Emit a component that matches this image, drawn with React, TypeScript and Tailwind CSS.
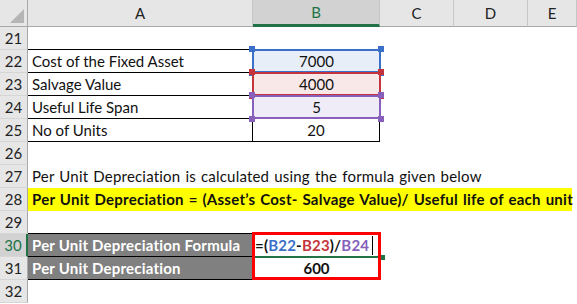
import React from 'react';

const COLS = [
  { key: 'A', w: 'w-[225px]' },
  { key: 'B', w: 'w-[127px]' },
  { key: 'C', w: 'w-[74px]' },
  { key: 'D', w: 'w-[74px]' },
  { key: 'E', w: 'flex-1' },
];

function RowHead({ n, active }: { n: number; active?: boolean }) {
  return (
    <div
      className={`w-[28px] h-[23px] shrink-0 flex items-center justify-center border-b border-[#d5d5d5] ${
        active
          ? 'bg-[#d2d2d2] text-[#217346] border-r-2 border-r-[#217346]'
          : 'bg-[#e6e6e6] text-[#222] border-r border-r-[#a8a8a8]'
      }`}
    >
      {n}
    </div>
  );
}

function Handles({ color }: { color: string }) {
  return (
    <>
      <span className={`absolute left-[-4px] top-[-4px] size-[6px] ${color}`} />
      <span className={`absolute right-[-4px] top-[-4px] size-[6px] ${color}`} />
      <span className={`absolute left-[-4px] bottom-[-4px] size-[6px] ${color}`} />
      <span className={`absolute right-[-4px] bottom-[-4px] size-[6px] ${color}`} />
    </>
  );
}

function RefCell({
  value,
  fill,
  border,
  handle,
}: {
  value: string;
  fill: string;
  border: string;
  handle: string;
}) {
  return (
    <div className={`relative w-[127px] h-[23px] flex items-center justify-center border-b border-black ${fill}`}>
      <span className={`absolute left-[-1px] top-[-1px] right-[-1px] bottom-[-1px] border-2 ${border}`} />
      <Handles color={handle} />
      <span className="relative">{value}</span>
    </div>
  );
}

export default function App() {
  return (
    <div className="w-[577px] h-[304px] overflow-hidden bg-white text-[15px] text-[#111] font-[Lato,'Open_Sans',sans-serif] leading-none select-none">
      {/* column headers */}
      <div className="flex h-[27px]">
        <div className="relative w-[28px] shrink-0 bg-[#e6e6e6] border-r border-b border-[#a8a8a8]">
          <svg className="absolute right-[3px] bottom-[3px]" width="14" height="14" viewBox="0 0 14 14">
            <polygon points="14,0 14,14 0,14" fill="#b5b5b5" />
          </svg>
        </div>
        {COLS.map((c) => (
          <div
            key={c.key}
            className={`${c.w} shrink-0 flex items-center justify-center border-r border-[#c6c6c6] ${
              c.key === 'B'
                ? 'bg-[#d2d2d2] text-[#217346] border-b-[3px] border-b-[#217346]'
                : 'bg-[#e6e6e6] text-[#222] border-b border-b-[#a8a8a8]'
            }`}
          >
            {c.key}
          </div>
        ))}
      </div>

      {/* 21 */}
      <div className="flex">
        <RowHead n={21} />
        <div className="w-[225px] h-[23px] border-b border-black" />
      </div>

      {/* 22 */}
      <div className="flex">
        <RowHead n={22} />
        <div className="w-[225px] h-[23px] px-[4px] flex items-center border-b border-r border-black">Cost of the Fixed Asset</div>
        <RefCell value="7000" fill="bg-[#e8eef8]" border="border-[#3a70c8]" handle="bg-[#3a70c8]" />
      </div>

      {/* 23 */}
      <div className="flex">
        <RowHead n={23} />
        <div className="w-[225px] h-[23px] px-[4px] flex items-center border-b border-r border-black">Salvage Value</div>
        <RefCell value="4000" fill="bg-[#f8e8e8]" border="border-[#c4343c]" handle="bg-[#c4343c]" />
      </div>

      {/* 24 */}
      <div className="flex">
        <RowHead n={24} />
        <div className="w-[225px] h-[23px] px-[4px] flex items-center border-b border-r border-black">Useful Life Span</div>
        <RefCell value="5" fill="bg-[#efebf7]" border="border-[#8660bb]" handle="bg-[#8660bb]" />
      </div>

      {/* 25 */}
      <div className="flex">
        <RowHead n={25} />
        <div className="w-[225px] h-[23px] px-[4px] flex items-center border-b border-r border-black">No of Units</div>
        <div className="w-[127px] h-[23px] flex items-center justify-center border-b border-r border-black">20</div>
      </div>

      {/* 26 */}
      <div className="flex">
        <RowHead n={26} />
      </div>

      {/* 27 */}
      <div className="flex">
        <RowHead n={27} />
        <div className="h-[23px] px-[4px] flex items-center whitespace-nowrap tracking-[0.2px] [word-spacing:1px]">
          Per Unit Depreciation is calculated using the formula given below
        </div>
      </div>

      {/* 28 */}
      <div className="flex">
        <RowHead n={28} />
        <div className="w-[544px] h-[23px] px-[4px] flex items-center whitespace-nowrap bg-[#ffff00] font-bold tracking-[0.25px] [word-spacing:1px]">
          Per Unit Depreciation = (Asset’s Cost- Salvage Value)/ Useful life of each unit
        </div>
      </div>

      {/* 29 */}
      <div className="flex">
        <RowHead n={29} />
        <div className="w-[225px] h-[23px] border-b border-black" />
      </div>

      {/* 30 */}
      <div className="flex">
        <RowHead n={30} active />
        <div className="w-[225px] h-[23px] px-[4px] flex items-center border-b border-r border-black bg-[#808080] text-white font-bold tracking-[0.2px]">
          Per Unit Depreciation Formula
        </div>
        <div className="relative w-[127px] h-[23px] flex items-center px-[2px] font-bold tracking-[0.2px]">
          <span className="absolute left-[-1px] top-[-1px] right-[-1px] bottom-[-1px] border-2 border-[#217346]" />
          <span className="absolute right-[-5px] bottom-[-3px] size-[5px] bg-[#217346]" />
          <span className="absolute left-[-1px] top-[-2px] w-[129px] h-[48px] border-[3px] border-[#ff0000] z-10" />
          <span className="relative">
            =(<span className="text-[#3a70c8]">B22</span>-<span className="text-[#c4343c]">B23</span>)/
            <span className="text-[#8660bb]">B24</span>
          </span>
          <span className="relative inline-block w-px h-[19px] bg-black ml-[3px]" />
        </div>
      </div>

      {/* 31 */}
      <div className="flex">
        <RowHead n={31} />
        <div className="w-[225px] h-[23px] px-[4px] flex items-center border-b border-r border-black bg-[#808080] text-white font-bold tracking-[0.2px]">
          Per Unit Depreciation
        </div>
        <div className="w-[127px] h-[23px] flex items-center justify-center font-bold">600</div>
      </div>

      {/* 32 */}
      <div className="flex">
        <RowHead n={32} />
      </div>
    </div>
  );
}
